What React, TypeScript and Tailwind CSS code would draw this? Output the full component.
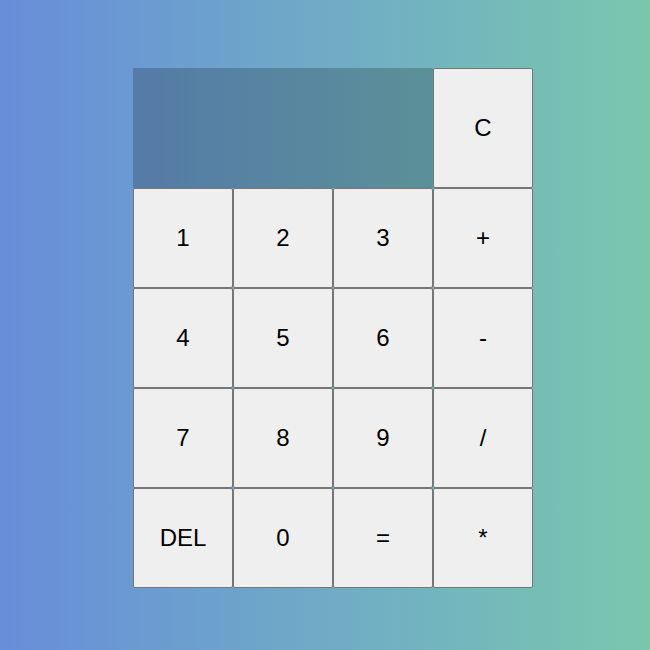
const keys = ['1', '2', '3', '+', '4', '5', '6', '-', '7', '8', '9', '/', 'DEL', '0', '=', '*']

function Key({ label }: { label: string }) {
  return (
    <button className="flex h-[100px] w-[100px] items-center justify-center rounded-[2px] border border-[#767676] bg-[#efefef] text-[24px] text-black">
      {label}
    </button>
  )
}

export default function App() {
  return (
    <div
      className="flex min-h-screen w-full items-start bg-gradient-to-r from-[#688dd9] to-[#7ac7ad] pl-[133px] pt-[68px]"
      style={{ fontFamily: '"Liberation Sans", Arial, sans-serif' }}
    >
      <div className="grid w-[400px] grid-cols-[repeat(4,100px)] grid-rows-[120px_repeat(4,100px)]">
        <div className="col-span-3 bg-black/20" />
        <button className="flex h-[120px] w-[100px] items-center justify-center rounded-[2px] border border-[#767676] bg-[#efefef] text-[24px] text-black">
          C
        </button>
        {keys.map((k) => (
          <Key key={k} label={k} />
        ))}
      </div>
    </div>
  )
}
